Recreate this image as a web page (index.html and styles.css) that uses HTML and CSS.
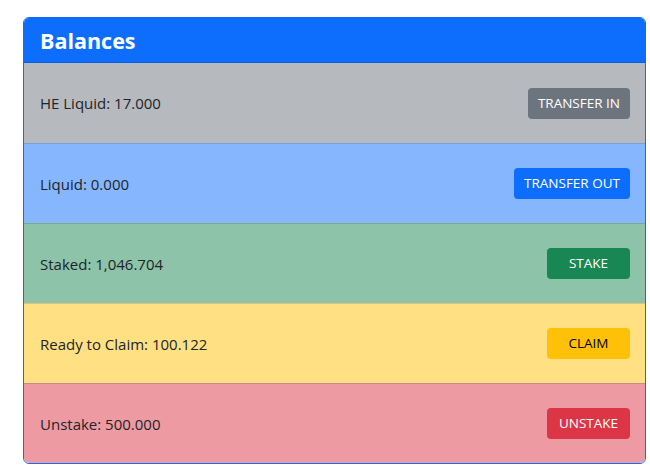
FILE: index.html
```html
<!DOCTYPE html>
<html lang="en">
<head>
<meta charset="utf-8">
<title>Balances</title>
<link rel="stylesheet" href="styles.css">
</head>
<body>
<div class="card">
  <div class="card-header"><h4 class="title">Balances</h4></div>
  <ul class="list">
    <li class="item item-secondary"><span>HE Liquid: 17.000</span><button class="btn btn-secondary">TRANSFER IN</button></li>
    <li class="item item-primary"><span>Liquid: 0.000</span><button class="btn btn-primary">TRANSFER OUT</button></li>
    <li class="item item-success"><span>Staked: 1,046.704</span><button class="btn btn-success">STAKE</button></li>
    <li class="item item-warning"><span>Ready to Claim: 100.122</span><button class="btn btn-warning">CLAIM</button></li>
    <li class="item item-danger"><span>Unstake: 500.000</span><button class="btn btn-danger">UNSTAKE</button></li>
  </ul>
</div>
</body>
</html>
```
FILE: styles.css
```css
* { box-sizing: border-box; }
html, body { margin: 0; background: #fff; }
body {
  padding: 17px 4px 0 23px;
  font-family: "Open Sans", "Noto Sans", "Liberation Sans", sans-serif;
  color: #212529;
  font-size: 15px;
}
.card {
  width: 623px;
  border: 1px solid #0d6efd;
  border-radius: 6px;
  overflow: hidden;
  background: #fff;
}
.card-header {
  background: #0d6efd;
  height: 45px;
  padding: 0 16px;
  display: flex;
  align-items: center;
  border-bottom: 1px solid rgba(0,0,0,.125);
}
.title {
  margin: 0;
  color: #fff;
  font-size: 21.5px;
  font-weight: 700;
  line-height: 1;
  padding-top: 1px;
}
.list { list-style: none; margin: 0; padding: 0; }
.item {
  height: 80px;
  padding: 0 15px 0 16px;
  display: flex;
  align-items: center;
  justify-content: space-between;
  border-top: 1px solid rgba(0,0,0,.125);
}
.list .item:first-child { border-top: 0; }
.item-secondary { background: #b6babe; }
.item-primary { background: #86b7fe; }
.item-success { background: #8cc3a9; }
.item-warning { background: #ffe083; }
.item-danger { background: #ed9aa2; }
.btn {
  font-family: inherit;
  font-size: 13.5px;
  line-height: 21px;
  min-width: 83px;
  padding: 4px 9px;
  border: 1px solid transparent;
  border-radius: 4px;
  color: #fff;
  text-align: center;
  cursor: pointer;
}
.btn-secondary { background: #6c757d; }
.btn-primary { background: #0d6efd; }
.btn-success { background: #198754; }
.btn-warning { background: #ffc107; color: #000; }
.btn-danger { background: #dc3545; }
```
